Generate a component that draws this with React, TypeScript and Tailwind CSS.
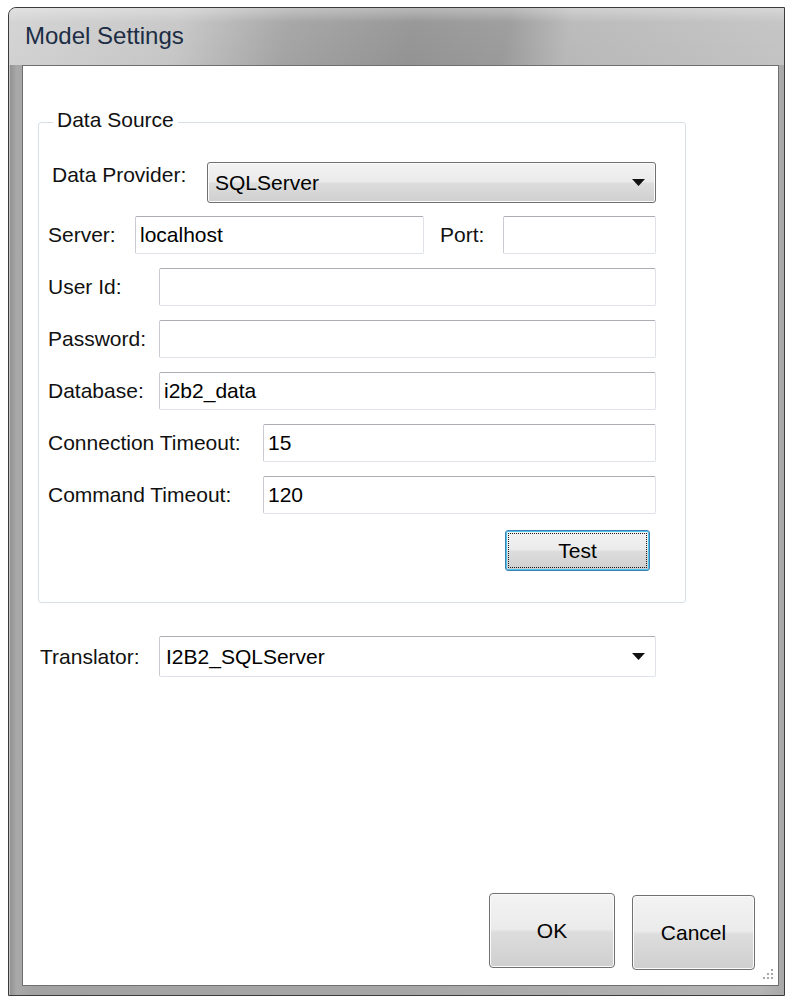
import React from "react";

// Win7-style push button face
const BUTTON_FACE =
  "bg-[linear-gradient(180deg,#f3f3f3_0%,#ebebeb_48%,#dddddd_52%,#cfcfcf_100%)]";

const DownArrow = () => (
  <svg width="13" height="7" viewBox="0 0 13 7" className="shrink-0">
    <path d="M0 0H13L6.5 7Z" fill="#111" />
  </svg>
);

const TextBox = ({ value = "", className = "" }: { value?: string; className?: string }) => (
  <input
    readOnly
    defaultValue={value}
    className={`h-[38px] rounded-[2px] border border-[#dfe3e9] border-t-[#abadb3] border-l-[#c9ccd2] bg-white pl-[4px] text-[21px] text-black outline-none ${className}`}
  />
);

const Label = ({ text, className = "" }: { text: string; className?: string }) => (
  <span className={`shrink-0 leading-[24px] whitespace-nowrap ${className}`}>{text}</span>
);

const ResizeGrip = () => (
  <svg width="14" height="14" viewBox="0 0 14 14" className="absolute right-[3px] bottom-[3px]">
    {[
      [10, 1],
      [10, 5],
      [6, 5],
      [10, 9],
      [6, 9],
      [2, 9],
    ].map(([x, y]) => (
      <g key={`${x}-${y}`}>
        <rect x={x + 1} y={y + 1} width="2" height="2" fill="#ffffff" />
        <rect x={x} y={y} width="2" height="2" fill="#a7a7a7" />
      </g>
    ))}
  </svg>
);

export default function App() {
  return (
    <div className="h-[996px] w-[785px] overflow-hidden bg-white pt-[7px] pl-[8px] font-['Liberation_Sans',Arial,sans-serif] text-[21px] text-[#111]">
      {/* window frame */}
      <div className="flex h-[989px] w-[777px] flex-col rounded-tl-[8px] border border-[#3b3b3b] bg-[linear-gradient(90deg,#8f8f8f_0%,#a9a9a9_1%,#a2a2a2_3%,#a6a6a6_50%,#b4b4b4_97%,#a8a8a8_100%)] shadow-[inset_1px_1px_0_rgba(255,255,255,0.45)]">
        {/* title bar */}
        <div className="flex h-[57px] shrink-0 items-center rounded-tl-[7px] bg-[linear-gradient(180deg,rgba(255,255,255,0.35)_0%,rgba(255,255,255,0.05)_25%,rgba(0,0,0,0)_100%),linear-gradient(100deg,#d2d2d2_0%,#c6c6c6_22%,#a3a3a3_36%,#939393_52%,#9a9a9a_64%,#b8b8b8_72%,#c3c3c3_100%)] pb-[2px] pl-[16px]">
          <span className="text-[24px] leading-[28px] text-[#1c2d45]">Model Settings</span>
        </div>

        {/* client area */}
        <div className="relative ml-[13px] flex h-[921px] w-[757px] flex-col border border-[#6f6f6f] bg-white">
          <fieldset className="mt-[42px] ml-[15px] w-[648px] rounded-[3px] border border-[#d5dfe5] px-[9px] pt-[26px] pb-[31px]">
            <legend className="ml-[5px] px-[4px] pb-[4px] leading-[24px]">Data Source</legend>

            <div className="flex flex-col">
              {/* provider */}
              <div className="flex h-[41px] items-start">
                <Label text="Data Provider:" className="mt-[1px] ml-[4px] w-[155px]" />
                <div
                  className={`flex h-[41px] w-[449px] items-center justify-between rounded-[3px] border border-[#707070] ${BUTTON_FACE} pr-[10px] pl-[7px] shadow-[inset_0_0_0_1px_#fbfbfb]`}
                >
                  <span className="text-black">SQLServer</span>
                  <DownArrow />
                </div>
              </div>

              <div className="mt-[13px] flex h-[38px] items-center">
                <Label text="Server:" className="w-[87px]" />
                <TextBox value="localhost" className="w-[289px]" />
                <Label text="Port:" className="ml-[16px] w-[63px]" />
                <TextBox className="w-[153px]" />
              </div>

              <div className="mt-[14px] flex h-[38px] items-center">
                <Label text="User Id:" className="w-[111px]" />
                <TextBox className="w-[497px]" />
              </div>

              <div className="mt-[14px] flex h-[38px] items-center">
                <Label text="Password:" className="w-[111px]" />
                <TextBox className="w-[497px]" />
              </div>

              <div className="mt-[14px] flex h-[38px] items-center">
                <Label text="Database:" className="w-[111px]" />
                <TextBox value="i2b2_data" className="w-[497px]" />
              </div>

              <div className="mt-[14px] flex h-[38px] items-center">
                <Label text="Connection Timeout:" className="w-[215px]" />
                <TextBox value="15" className="w-[393px]" />
              </div>

              <div className="mt-[14px] flex h-[38px] items-center">
                <Label text="Command Timeout:" className="w-[215px]" />
                <TextBox value="120" className="w-[393px]" />
              </div>

              {/* focused default button */}
              <button
                className={`mt-[16px] ml-[457px] flex h-[41px] w-[145px] rounded-[3px] border border-[#3c7fb1] ${BUTTON_FACE} p-[1px] shadow-[inset_0_0_0_1px_#4fc3ee]`}
              >
                <span className="m-[1px] flex flex-1 items-center justify-center border border-dotted border-[#1a1a1a] text-black">
                  Test
                </span>
              </button>
            </div>
          </fieldset>

          {/* translator */}
          <div className="mt-[33px] ml-[17px] flex h-[41px] items-center">
            <Label text="Translator:" className="w-[119px]" />
            <div className="flex h-[41px] w-[497px] items-center justify-between rounded-[2px] border border-[#dfe3e9] border-t-[#abadb3] border-l-[#c9ccd2] bg-white pr-[10px] pl-[6px]">
              <span className="text-black">I2B2_SQLServer</span>
              <DownArrow />
            </div>
          </div>

          <div className="flex-1" />

          <div className="flex items-start justify-end gap-[17px] pr-[23px] pb-[15px]">
            <button
              className={`h-[75px] w-[126px] rounded-[4px] border border-[#707070] ${BUTTON_FACE} text-black shadow-[inset_0_0_0_1px_#fbfbfb]`}
            >
              OK
            </button>
            <button
              className={`mt-[2px] h-[75px] w-[123px] rounded-[4px] border border-[#707070] ${BUTTON_FACE} text-black shadow-[inset_0_0_0_1px_#fbfbfb]`}
            >
              Cancel
            </button>
          </div>

          <ResizeGrip />
        </div>
      </div>
    </div>
  );
}
